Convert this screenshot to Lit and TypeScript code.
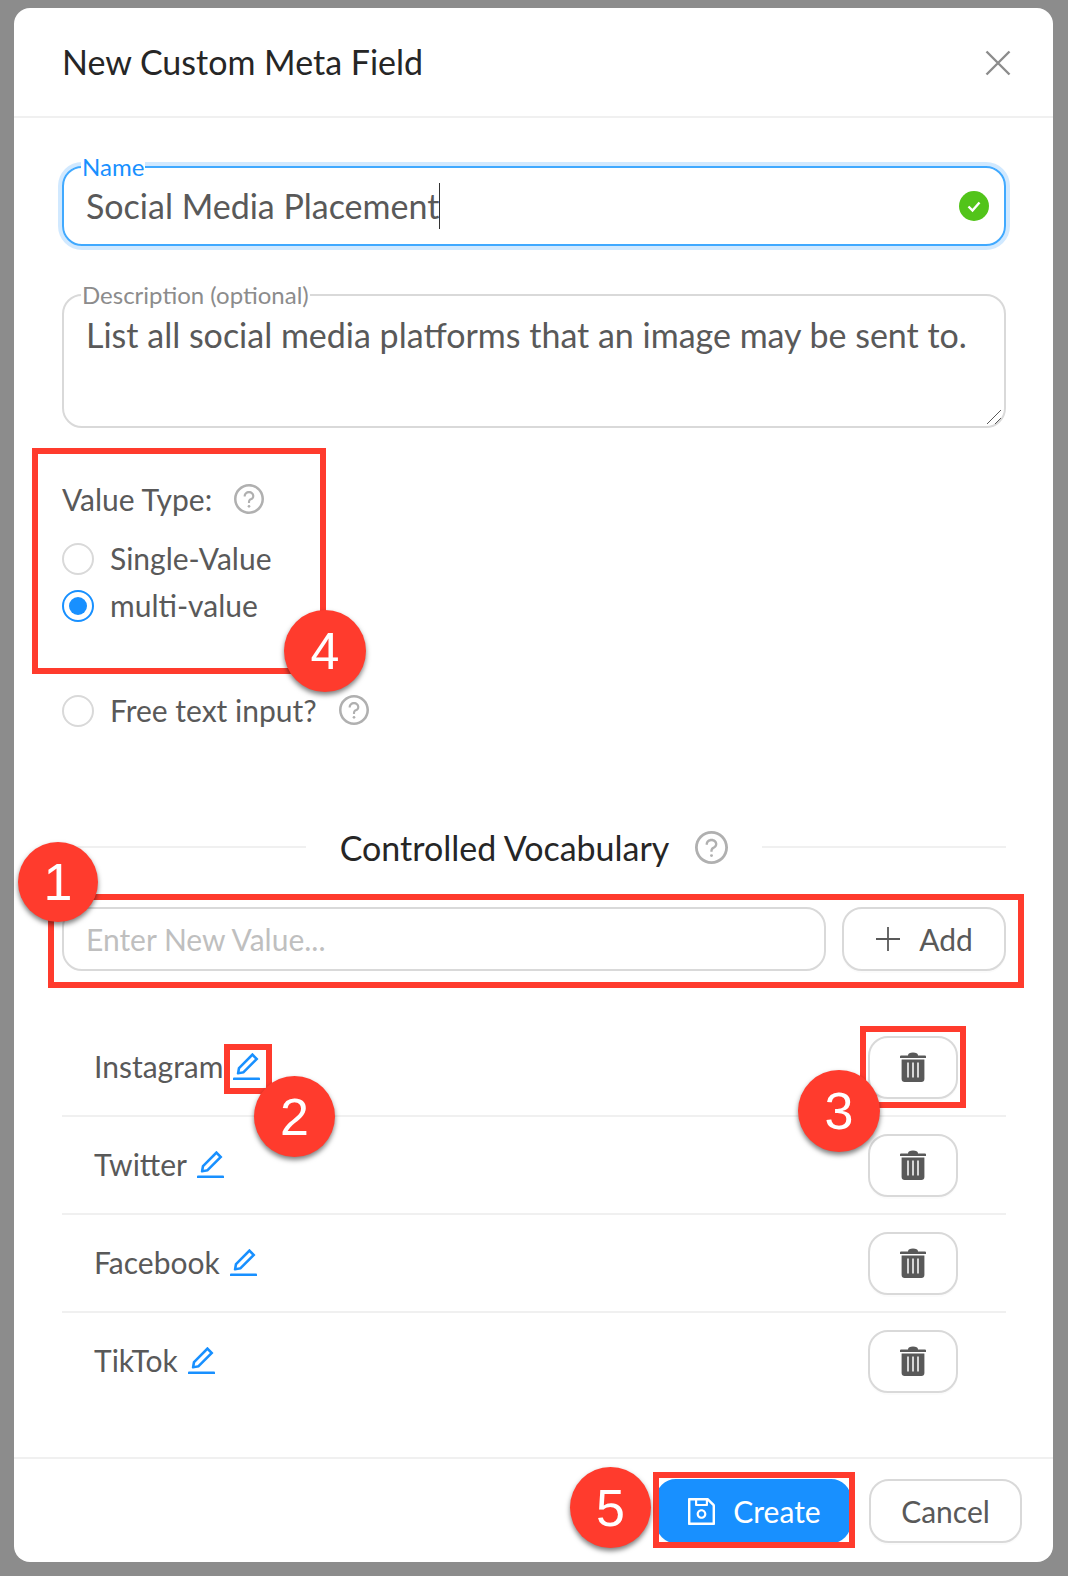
import { LitElement, html, css } from "lit";
import { customElement } from "lit/decorators.js";

const q = html`<svg class="q" viewBox="64 64 896 896"><path d="M512 64C264.6 64 64 264.6 64 512s200.6 448 448 448 448-200.6 448-448S759.4 64 512 64zm0 820c-205.4 0-372-166.6-372-372s166.6-372 372-372 372 166.6 372 372-166.6 372-372 372z" fill="#b0b0b0"/><path d="M623.6 316.7C593.6 290.4 554 276 512 276s-81.6 14.5-111.6 40.7C369.2 344 352 380.7 352 420v7.6c0 4.4 3.6 8 8 8h48c4.4 0 8-3.6 8-8V420c0-44.1 43.1-80 96-80s96 35.9 96 80c0 31.1-22 59.6-56.1 72.7-21.2 8.1-39.2 22.3-52.1 40.9-13.1 19-19.9 41.8-19.9 64.9V620c0 4.4 3.6 8 8 8h48c4.4 0 8-3.6 8-8v-22.7a48.3 48.3 0 0 1 30.9-44.8c59-22.7 97.1-74.7 97.1-132.5.1-39.3-17.1-76-48.3-103.3z" fill="#b0b0b0"/><path d="M472 732a40 40 0 1 0 80 0 40 40 0 1 0-80 0z" fill="#b0b0b0"/></svg>`;

const edit = html`<svg class="edit" viewBox="112 112 800 800"><path fill="#1890ff" d="M257.7 752c2 0 4-.2 6-.5L431.9 722c2-.4 3.9-1.3 5.3-2.8l423.9-423.9a9.96 9.96 0 0 0 0-14.1L694.9 114.9c-1.9-1.9-4.4-2.9-7.1-2.9s-5.2 1-7.1 2.9L256.8 538.8c-1.5 1.5-2.4 3.3-2.8 5.3l-29.5 168.2a33.5 33.5 0 0 0 9.4 29.8c6.6 6.4 14.9 9.9 23.8 9.9zm67.4-174.4L687.8 215l73.3 73.3-362.7 362.6-88.9 15.7 15.6-89zM880 836H144c-17.7 0-32 14.3-32 32v36c0 4.4 3.6 8 8 8h784c4.4 0 8-3.6 8-8v-36c0-17.7-14.3-32-32-32z"/></svg>`;

const trash = html`<svg class="trash" viewBox="0 0 26 30"><path fill="#595959" d="M8 3.400C8 1.200 10 .4 13 .4s5 .8 5 3h7a1 1 0 0 1 1 1V6H0V4.400a1 1 0 0 1 1-1z"/><path fill="#595959" d="M1.600 7.600h22.800V27c0 1.700-1.200 3-3 3H4.600c-1.800 0-3-1.300-3-3z"/><path fill="none" stroke="#fff" stroke-width="1.500" d="M8 10.500V25.500M13 10.500V25.500M18 10.500V25.500"/></svg>`;

const save = html`<svg class="save" viewBox="112 112 800 800"><path fill="#fff" d="M893.3 293.3L730.7 130.7c-7.5-7.5-16.7-13.3-26.7-16.8V112H144c-17.7 0-32 14.3-32 32v736c0 17.7 14.3 32 32 32h736c17.7 0 32-14.3 32-32V338.5c0-17-6.7-33.2-18.7-45.2zM384 184h256v104H384V184zm456 656H184V184h136v136c0 17.7 14.3 32 32 32h320c17.7 0 32-14.3 32-32V205.8l136 136V840zM512 442c-79.5 0-144 64.5-144 144s64.5 144 144 144 144-64.5 144-144-64.5-144-144-144zm0 224c-44.2 0-80-35.8-80-80s35.800-80 80-80 80 35.8 80 80-35.8 80-80 80z"/></svg>`;

const values = ["Instagram", "Twitter", "Facebook", "TikTok"];

const marks: { n: number; x: number; y: number; d: number }[] = [
  { n: 1, x: 18, y: 842, d: 80 },
  { n: 2, x: 254, y: 1076, d: 81 },
  { n: 3, x: 798, y: 1070, d: 82 },
  { n: 4, x: 284, y: 610, d: 82 },
  { n: 5, x: 570, y: 1467, d: 81 },
];
const boxes: { x: number; y: number; w: number; h: number }[] = [
  { x: 48, y: 894, w: 976, h: 94 },
  { x: 224, y: 1044, w: 48, h: 50 },
  { x: 860, y: 1026, w: 106, h: 82 },
  { x: 32, y: 448, w: 294, h: 226 },
  { x: 653, y: 1472, w: 202, h: 76 },
];

@customElement("app-root")
export class AppRoot extends LitElement {
  static styles = css`
    :host {
      display: block;
      position: relative;
      width: 1068px;
      height: 1576px;
      background: #8c8c8c;
      font-family: Lato, "Liberation Sans", sans-serif;
      color: #595959;
      overflow: hidden;
    }
    .page {
      padding: 8px 15px 14px 14px;
      height: 100%;
      box-sizing: border-box;
    }
    .modal {
      background: #fff;
      border-radius: 16px;
      height: 100%;
      display: flex;
      flex-direction: column;
    }
    .head {
      height: 110px;
      flex: none;
      box-sizing: border-box;
      border-bottom: 2px solid #f0f0f0;
      padding: 0 42px 0 48px;
      display: flex;
      align-items: center;
      justify-content: space-between;
    }
    .title {
      font-size: 34px;
      color: #262626;
      line-height: 40px;
    }
    .close {
      width: 26px;
      height: 26px;
      display: block;
      margin-top: 2px;
    }
    .body {
      flex: 1;
      padding: 48px 47px 0 48px;
      display: flex;
      flex-direction: column;
    }
    .field {
      position: relative;
      box-sizing: border-box;
      border: 2px solid #d9d9d9;
      border-radius: 20px;
      font-size: 34px;
      line-height: 40px;
      padding: 0 22px;
    }
    .field.name {
      height: 80px;
      border-color: #40a9ff;
      box-shadow: 0 0 0 4px rgba(24, 144, 255, 0.2);
      display: flex;
      align-items: center;
      justify-content: space-between;
    }
    .field.desc {
      height: 134px;
      margin-top: 48px;
      padding-top: 19px;
    }
    .legend {
      position: absolute;
      left: 17px;
      top: -15px;
      background: #fff;
      font-size: 24px;
      line-height: 28px;
      padding: 0 1px;
      color: #8c8c8c;
    }
    .name .legend {
      color: #1890ff;
    }
    .typed {
      display: inline-block;
      border-right: 1.5px solid #333;
      height: 46px;
      line-height: 46px;
    }
    .ok {
      width: 30px;
      height: 30px;
      display: block;
      margin-right: -7px;
    }
    .grip {
      position: absolute;
      right: 2px;
      bottom: 1px;
      width: 16px;
      height: 16px;
      display: block;
    }
    .vt {
      margin-top: 51px;
      display: flex;
      align-items: center;
      font-size: 30px;
      line-height: 40px;
      gap: 22px;
      height: 40px;
    }
    .q {
      width: 30px;
      height: 30px;
      display: block;
      flex: none;
    }
    .opt {
      display: flex;
      align-items: center;
      gap: 16px;
      font-size: 30px;
      height: 40px;
      line-height: 40px;
    }
    .opt .txt,
    .opt .q {
      margin-top: -2px;
    }
    .opt.first {
      margin-top: 20px;
    }
    .opt.second {
      margin-top: 7px;
    }
    .opt.third {
      margin-top: 65px;
    }
    .opt.third .q {
      margin-left: 6px;
    }
    .radio {
      width: 32px;
      height: 32px;
      box-sizing: border-box;
      border: 2px solid #d9d9d9;
      border-radius: 50%;
      flex: none;
      display: flex;
      align-items: center;
      justify-content: center;
    }
    .radio.on {
      border-color: #1890ff;
    }
    .radio.on::after {
      content: "";
      width: 18px;
      height: 18px;
      border-radius: 50%;
      background: #1890ff;
    }
    .divider {
      margin-top: 94px;
      display: flex;
      align-items: center;
      height: 44px;
    }
    .divider .line {
      flex: 1;
      height: 2px;
      background: #f0f0f0;
    }
    .divider .mid {
      display: flex;
      align-items: center;
      gap: 26px;
      padding: 0 34px;
      font-size: 34px;
      color: #262626;
    }
    .divider .q {
      width: 33px;
      height: 33px;
    }
    .adder {
      margin-top: 38px;
      display: flex;
      gap: 16px;
      height: 64px;
    }
    .input {
      flex: 1;
      box-sizing: border-box;
      border: 2px solid #d9d9d9;
      border-radius: 20px;
      padding: 0 22px;
      font-size: 30px;
      color: #bfbfbf;
      display: flex;
      align-items: center;
    }
    .btn {
      box-sizing: border-box;
      border: 2px solid #d9d9d9;
      border-radius: 20px;
      background: #fff;
      box-shadow: 0 2px 0 rgba(0, 0, 0, 0.015);
      display: flex;
      align-items: center;
      justify-content: center;
      font-size: 30px;
      color: #595959;
    }
    .add {
      width: 164px;
      gap: 18px;
    }
    .add svg {
      width: 26px;
      height: 26px;
      display: block;
    }
    .rows {
      margin-top: 48px;
    }
    .row {
      height: 98px;
      box-sizing: border-box;
      border-bottom: 2px solid #f0f0f0;
      padding: 0 48px 0 32px;
      display: flex;
      align-items: center;
      justify-content: space-between;
      font-size: 30px;
    }
    .row:last-child {
      border-bottom: 0;
      padding-bottom: 2px;
    }
    .row .lbl {
      display: flex;
      align-items: center;
      gap: 10px;
      margin-top: -2px;
    }
    .edit {
      width: 27px;
      height: 27px;
      display: block;
    }
    .del {
      width: 90px;
      height: 63px;
    }
    .trash {
      width: 26px;
      height: 30px;
      display: block;
    }
    .foot {
      height: 105px;
      flex: none;
      box-sizing: border-box;
      border-top: 2px solid #f0f0f0;
      padding: 20px 31px 0 0;
      display: flex;
      justify-content: flex-end;
      gap: 18px;
    }
    .foot .btn {
      height: 64px;
    }
    .create {
      width: 195px;
      padding-left: 2px;
      background: #1890ff;
      border-color: #1890ff;
      color: #fff;
      gap: 18px;
    }
    .save {
      width: 27px;
      height: 27px;
      display: block;
    }
    .cancel {
      width: 153px;
    }
    .box {
      position: absolute;
      box-sizing: border-box;
      border: 6px solid #ff3b2d;
    }
    .mark {
      position: absolute;
      border-radius: 50%;
      background: #ff3b2d;
      box-shadow: 0 3px 5px rgba(0, 0, 0, 0.5);
      color: #fff;
      font-family: "Liberation Sans", Arial, sans-serif;
      font-size: 52px;
      line-height: 1;
      display: flex;
      align-items: center;
      justify-content: center;
    }
  `;

  render() {
    return html`
      <div class="page">
        <div class="modal">
          <div class="head">
            <div class="title">New Custom Meta Field</div>
            <svg class="close" viewBox="0 0 26 26"><path d="M1.500 1.500L24.500 24.500M24.500 1.500L1.500 24.500" stroke="#8c8c8c" stroke-width="2.400" fill="none"/></svg>
          </div>
          <div class="body">
            <div class="field name">
              <span class="legend">Name</span>
              <span class="typed">Social Media Placement</span>
              <svg class="ok" viewBox="0 0 30 30"><circle cx="15" cy="15" r="15" fill="#52c41a"/><path d="M9.500 15.500L13.500 19.500L20.500 11.500" stroke="#fff" stroke-width="2.400" fill="none"/></svg>
            </div>
            <div class="field desc">
              <span class="legend">Description (optional)</span>
              List all social media platforms that an image may be sent to.
              <svg class="grip" viewBox="0 0 16 16"><path d="M1 15L15 1M9 15L15 9" stroke="#595959" stroke-width="1" fill="none"/></svg>
            </div>
            <div class="vt"><span>Value Type:</span>${q}</div>
            <div class="opt first"><span class="radio"></span><span class="txt">Single-Value</span></div>
            <div class="opt second"><span class="radio on"></span><span class="txt">multi-value</span></div>
            <div class="opt third"><span class="radio"></span><span class="txt">Free text input?</span>${q}</div>
            <div class="divider">
              <div class="line"></div>
              <div class="mid"><span>Controlled Vocabulary</span>${q}</div>
              <div class="line"></div>
            </div>
            <div class="adder">
              <div class="input">Enter New Value...</div>
              <div class="btn add">
                <svg viewBox="0 0 26 26"><path d="M13 1V25M1 13H25" stroke="#595959" stroke-width="1.800" fill="none"/></svg>
                <span>Add</span>
              </div>
            </div>
            <div class="rows">
              ${values.map(
                (v) => html`<div class="row">
                  <div class="lbl"><span>${v}</span>${edit}</div>
                  <div class="btn del">${trash}</div>
                </div>`
              )}
            </div>
          </div>
          <div class="foot">
            <div class="btn create">${save}<span>Create</span></div>
            <div class="btn cancel">Cancel</div>
          </div>
        </div>
      </div>
      ${boxes.map(
        (b) => html`<div class="box" style="left:${b.x}px;top:${b.y}px;width:${b.w}px;height:${b.h}px"></div>`
      )}
      ${marks.map(
        (m) => html`<div class="mark" style="left:${m.x}px;top:${m.y}px;width:${m.d}px;height:${m.d}px">${m.n}</div>`
      )}
    `;
  }
}
